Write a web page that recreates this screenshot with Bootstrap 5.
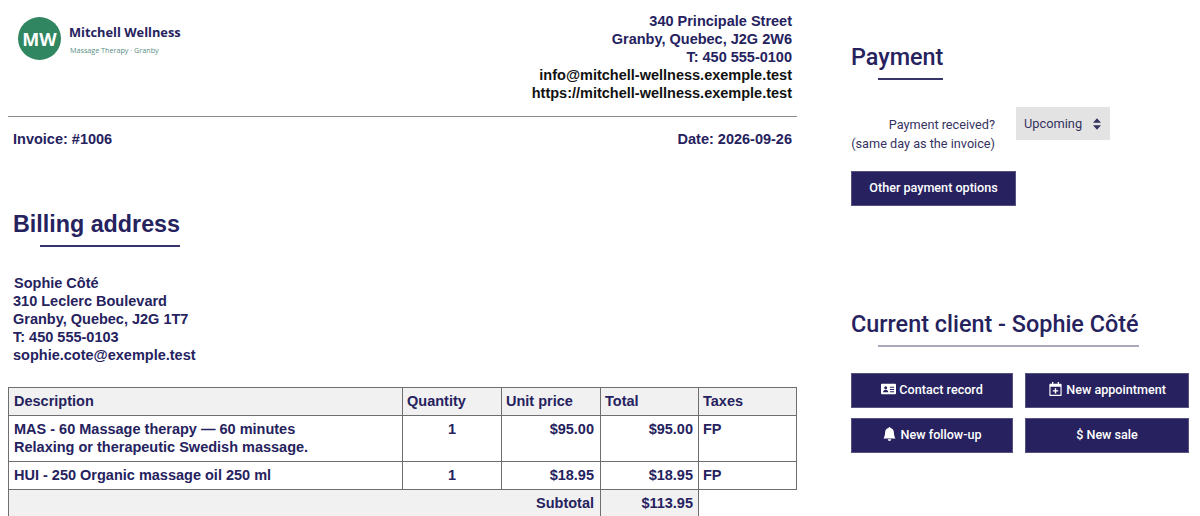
<!DOCTYPE html>
<html lang="en">
<head>
    <meta charset="UTF-8" />
    <title>Invoice #1006</title>
    <link href="https://cdn.jsdelivr.net/npm/bootstrap@5.3.6/dist/css/bootstrap.min.css" rel="stylesheet" crossorigin="anonymous" />
    <style>
        html, body { height: 516px; overflow: hidden; }
        body { color: #25225e; font-family: "Liberation Sans", Arial, sans-serif; font-size: 14.5px; font-weight: 700; line-height: 18px; }
        .invoice-side { width: 789px; margin-left: 8px; }
        .action-side { width: 338px; margin-left: 54px; font-family: Roboto, sans-serif; font-weight: 400; }

        .brand-head { height: 117px; border-bottom: 1px solid #8a8a8a; padding: 12px 5px 0 10px; }
        .brand-circle { width: 43px; height: 43px; margin-top: 5px; background: #2f8661; color: #fff; font-family: "Open Sans", sans-serif; font-size: 18px; font-weight: 700; }
        .brand-name { font-family: "Open Sans", sans-serif; font-size: 12.8px; font-weight: 700; line-height: 16px; margin-top: 12px; }
        .brand-sub { font-family: "Open Sans", sans-serif; font-size: 7.2px; font-weight: 400; line-height: 10px; color: #5a8f86; margin-top: 5px; padding-left: 1px; }
        .black-line { color: #111; }
        .invoice-meta { padding: 13px 5px 0; }

        .billing-title { font-size: 23.3px; line-height: 28px; font-weight: 700; margin: 0; }
        .title-rule { height: 2px; margin-left: 27px; margin-top: 7px; background: #37346a; }
        .billing-block { margin-top: 62px; margin-left: 5px; }
        .billing-addr { margin: 27px 0 23px; }
        .billing-addr div:first-child { padding-left: 1px; }

        .invoice-table { width: 788px; table-layout: fixed; border-collapse: collapse; }
        .invoice-table th, .invoice-table td { border: 1px solid #6e6e6e; padding: 4px 4px 5px 4px; vertical-align: top; }
        .invoice-table th { background: #f1f1f1; font-weight: 700; padding-top: 4px; padding-bottom: 5px; }
        .invoice-table td.sub-cell { background: #f1f1f1; }
        .invoice-table td.no-cell { border: 0; }
        .invoice-table td.money-cell { padding-right: 5px; }
        .invoice-table td.price-cell { padding-right: 6px; }
        .desc-col { padding-left: 5px !important; }

        .side-title { font-family: Roboto, sans-serif; font-size: 23.4px; line-height: 28px; font-weight: 500; margin: 0; }
        .pay-block { margin-top: 43px; }
        .pay-row { margin-top: 27px; }
        .pay-label { width: 144px; font-size: 12.7px; line-height: 19px; color: #35335f; margin-top: 8px; white-space: nowrap; }
        .pay-select { width: 94px; height: 33px; margin-left: 21px; border: 0; border-radius: 0; background-color: #e3e3e3; color: #35335f; font-family: Roboto, sans-serif; font-size: 12.8px; padding: 0 0 0 8px; background-size: 8px 12px; background-position: right 9px center; background-image: url("data:image/svg+xml,%3csvg xmlns='http://www.w3.org/2000/svg' viewBox='0 0 9 13'%3e%3cpath fill='%2335335f' d='M4.5 0 9 5H0zM4.5 13 0 8h9z'/%3e%3c/svg%3e"); }
        .pay-btn, .client-btn { border-radius: 0; background: #27225f; border: 1px solid #55527f; color: #fff; font-family: Roboto, sans-serif; font-size: 12.6px; font-weight: 500; }
        .pay-btn { width: 165px; height: 35px; margin-top: 18px; padding: 0; }
        .client-block { margin-top: 104px; }
        .client-grid { display: grid; grid-template-columns: 162px 164px; grid-auto-rows: 35px; column-gap: 12px; row-gap: 10px; margin-top: 26px; }
        .client-btn { padding: 0; }
        .client-btn svg { width: 15px; height: 14px; fill: #fff; vertical-align: -2px; }
        .rule-grey { background: #a9a9bb; }
    </style>
</head>
<body>

<div class="d-flex">
    <!-- Facture -->
    <div class="invoice-side">
        <div class="brand-head d-flex justify-content-between">
            <div class="d-flex">
                <div class="brand-circle rounded-circle d-flex align-items-center justify-content-center">MW</div>
                <div class="ms-2">
                    <div class="brand-name">Mitchell Wellness</div>
                    <div class="brand-sub">Massage Therapy · Granby</div>
                </div>
            </div>
            <div class="text-end">
                <div>340 Principale Street</div>
                <div>Granby, Quebec, J2G 2W6</div>
                <div>T: 450 555-0100</div>
                <div class="black-line">info@mitchell-wellness.exemple.test</div>
                <div class="black-line">https://mitchell-wellness.exemple.test</div>
            </div>
        </div>

        <div class="invoice-meta d-flex justify-content-between">
            <div>Invoice: #1006</div>
            <div>Date: 2026-09-26</div>
        </div>

        <div class="billing-block">
            <div class="d-inline-block">
                <h2 class="billing-title">Billing address</h2>
                <div class="title-rule"></div>
            </div>
            <div class="billing-addr">
                <div>Sophie Côté</div>
                <div>310 Leclerc Boulevard</div>
                <div>Granby, Quebec, J2G 1T7</div>
                <div>T: 450 555-0103</div>
                <div>sophie.cote@exemple.test</div>
            </div>
        </div>

        <table class="invoice-table">
            <colgroup>
                <col style="width: 394px"><col style="width: 99px"><col style="width: 99px"><col style="width: 98px"><col style="width: 98px">
            </colgroup>
            <thead>
                <tr>
                    <th class="desc-col">Description</th>
                    <th>Quantity</th>
                    <th>Unit price</th>
                    <th>Total</th>
                    <th>Taxes</th>
                </tr>
            </thead>
            <tbody>
                <tr>
                    <td class="desc-col">MAS - 60 Massage therapy — 60 minutes<br>Relaxing or therapeutic Swedish massage.</td>
                    <td class="text-center">1</td>
                    <td class="text-end price-cell">$95.00</td>
                    <td class="text-end money-cell">$95.00</td>
                    <td>FP</td>
                </tr>
                <tr>
                    <td class="desc-col">HUI - 250 Organic massage oil 250 ml</td>
                    <td class="text-center">1</td>
                    <td class="text-end price-cell">$18.95</td>
                    <td class="text-end money-cell">$18.95</td>
                    <td>FP</td>
                </tr>
                <tr>
                    <td class="sub-cell text-end price-cell" colspan="3">Subtotal</td>
                    <td class="sub-cell text-end money-cell">$113.95</td>
                    <td class="no-cell"></td>
                </tr>
            </tbody>
        </table>
    </div>

    <!-- Colonne actions -->
    <div class="action-side">
        <div class="pay-block">
            <div class="d-inline-block">
                <h2 class="side-title">Payment</h2>
                <div class="title-rule"></div>
            </div>
            <div class="pay-row d-flex align-items-start">
                <div class="pay-label text-end">Payment received?<br>(same day as the invoice)</div>
                <select class="form-select pay-select" aria-label="Payment received">
                    <option selected>Upcoming</option>
                    <option>Yes</option>
                    <option>No</option>
                </select>
            </div>
            <button type="button" class="btn pay-btn d-block">Other payment options</button>
        </div>

        <div class="client-block">
            <div class="d-inline-block">
                <h2 class="side-title">Current client - Sophie Côté</h2>
                <div class="title-rule rule-grey"></div>
            </div>
            <div class="client-grid">
                <button type="button" class="btn client-btn">
                    <svg viewBox="0 0 16 14"><path fill-rule="evenodd" d="M1 1.5h14a1 1 0 0 1 1 1v9a1 1 0 0 1-1 1H1a1 1 0 0 1-1-1v-9a1 1 0 0 1 1-1zM5 4a1.6 1.6 0 1 0 0 3.2A1.6 1.6 0 0 0 5 4zM2.2 10.4h5.6C7.800 8.800 6.600 7.800 5 7.800s-2.800 1-2.800 2.600zM9.500 4.500v1.200h4.500V4.500zM9.500 6.900v1.200h4.500V6.900zM9.500 9.300v1.100h4.500V9.300z"/></svg>
                    Contact record
                </button>
                <button type="button" class="btn client-btn">
                    <svg viewBox="0 0 14 16"><path fill-rule="evenodd" d="M3 0h1.500v2h5V0H11v2h2a1 1 0 0 1 1 1v12a1 1 0 0 1-1 1H1a1 1 0 0 1-1-1V3a1 1 0 0 1 1-1h2zM1.300 5.500v9.200h11.400V5.500zM6.200 7h1.600v2.300h2.300v1.500H7.800v2.300H6.200v-2.300H3.900V9.300h2.300z"/></svg>
                    New appointment
                </button>
                <button type="button" class="btn client-btn">
                    <svg viewBox="0 0 16 16"><path d="M8 16a2 2 0 0 0 2-2H6a2 2 0 0 0 2 2zm.995-14.901a1 1 0 1 0-1.990 0A5.002 5.002 0 0 0 3 6c0 1.098-.5 6-2 7h14c-1.500-1-2-5.902-2-7 0-2.420-1.720-4.440-4.005-4.901z"/></svg>
                    New follow-up
                </button>
                <button type="button" class="btn client-btn">$ New sale</button>
            </div>
        </div>
    </div>
</div>

<script src="https://cdn.jsdelivr.net/npm/bootstrap@5.3.6/dist/js/bootstrap.bundle.min.js" crossorigin="anonymous"></script>
</body>
</html>
